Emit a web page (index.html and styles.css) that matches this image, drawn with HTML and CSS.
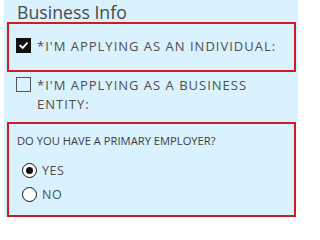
FILE: index.html
```html
<!DOCTYPE html>
<html>
<head>
<meta charset="utf-8">
<link rel="stylesheet" href="styles.css">
</head>
<body>
<div class="panel">
  <h2 class="title">Business Info</h2>
  <div class="box box-check">
    <label class="check-row">
      <span class="checkbox checked">
        <svg viewBox="0 0 16 16" width="16" height="16"><path d="M4 8.2 L7 11 L12.2 5.2" fill="none" stroke="#fff" stroke-width="2.2" stroke-linecap="square"/></svg>
      </span>
      <span class="check-text">*I'M APPLYING AS AN INDIVIDUAL:</span>
    </label>
  </div>
  <label class="check-row plain-row">
    <span class="checkbox"></span>
    <span class="check-text">*I'M APPLYING AS A BUSINESS ENTITY:</span>
  </label>
  <div class="box box-radio">
    <div class="question">DO YOU HAVE A PRIMARY EMPLOYER?</div>
    <label class="radio-row">
      <span class="radio on"></span>
      <span class="radio-text">YES</span>
    </label>
    <label class="radio-row">
      <span class="radio"></span>
      <span class="radio-text">NO</span>
    </label>
  </div>
</div>
</body>
</html>
```

FILE: styles.css
```css
html, body {
  margin: 0;
  padding: 0;
  background: #ffffff;
}
body {
  font-family: "Open Sans", "Liberation Sans", sans-serif;
  color: #4d4d4d;
}
.panel {
  margin-left: 4px;
  width: 289px;
  padding: 0 2px 0 3px;
  background: #daf2fd;
}
.title {
  margin: 0;
  padding: 2px 0 0 10px;
  font-size: 17.7px;
  font-weight: 400;
  line-height: 20px;
  color: #4a4a4a;
}
.box {
  border: 2px solid #cf1b22;
}
.box-check {
  padding: 13px 0 14px 7px;
}
.check-row {
  display: flex;
  align-items: flex-start;
  gap: 6px;
}
.plain-row {
  padding: 4px 10px 8px 9px;
}
.checkbox {
  flex: none;
  width: 15px;
  height: 15px;
  box-sizing: border-box;
  border: 1.5px solid #555;
  background: transparent;
  display: flex;
  align-items: center;
  justify-content: center;
  margin-top: 1px;
}
.checkbox.checked {
  background: #111;
  border-color: #111;
}
.checkbox svg {
  width: 13px;
  height: 13px;
}
.check-text {
  font-size: 13px;
  line-height: 19px;
  letter-spacing: 1px;
  color: #4f4f4f;
}
.box-radio {
  padding: 9px 0 9px 13px;
  box-shadow: 3px 0 0 #fff;
}
.question {
  margin-left: -5px;
  font-size: 11.2px;
  line-height: 15px;
  color: #3d3d3d;
  margin-bottom: 10px;
}
.radio-row {
  display: flex;
  align-items: center;
  gap: 5px;
  height: 24px;
}
.radio {
  flex: none;
  width: 15px;
  height: 15px;
  box-sizing: border-box;
  border: 1.5px solid #111;
  border-radius: 50%;
  background: #fff;
  display: flex;
  align-items: center;
  justify-content: center;
}
.radio.on::after {
  content: "";
  width: 7px;
  height: 7px;
  border-radius: 50%;
  background: #111;
}
.radio-text {
  font-size: 12.5px;
  letter-spacing: 0.5px;
  color: #4d4d4d;
}
```
